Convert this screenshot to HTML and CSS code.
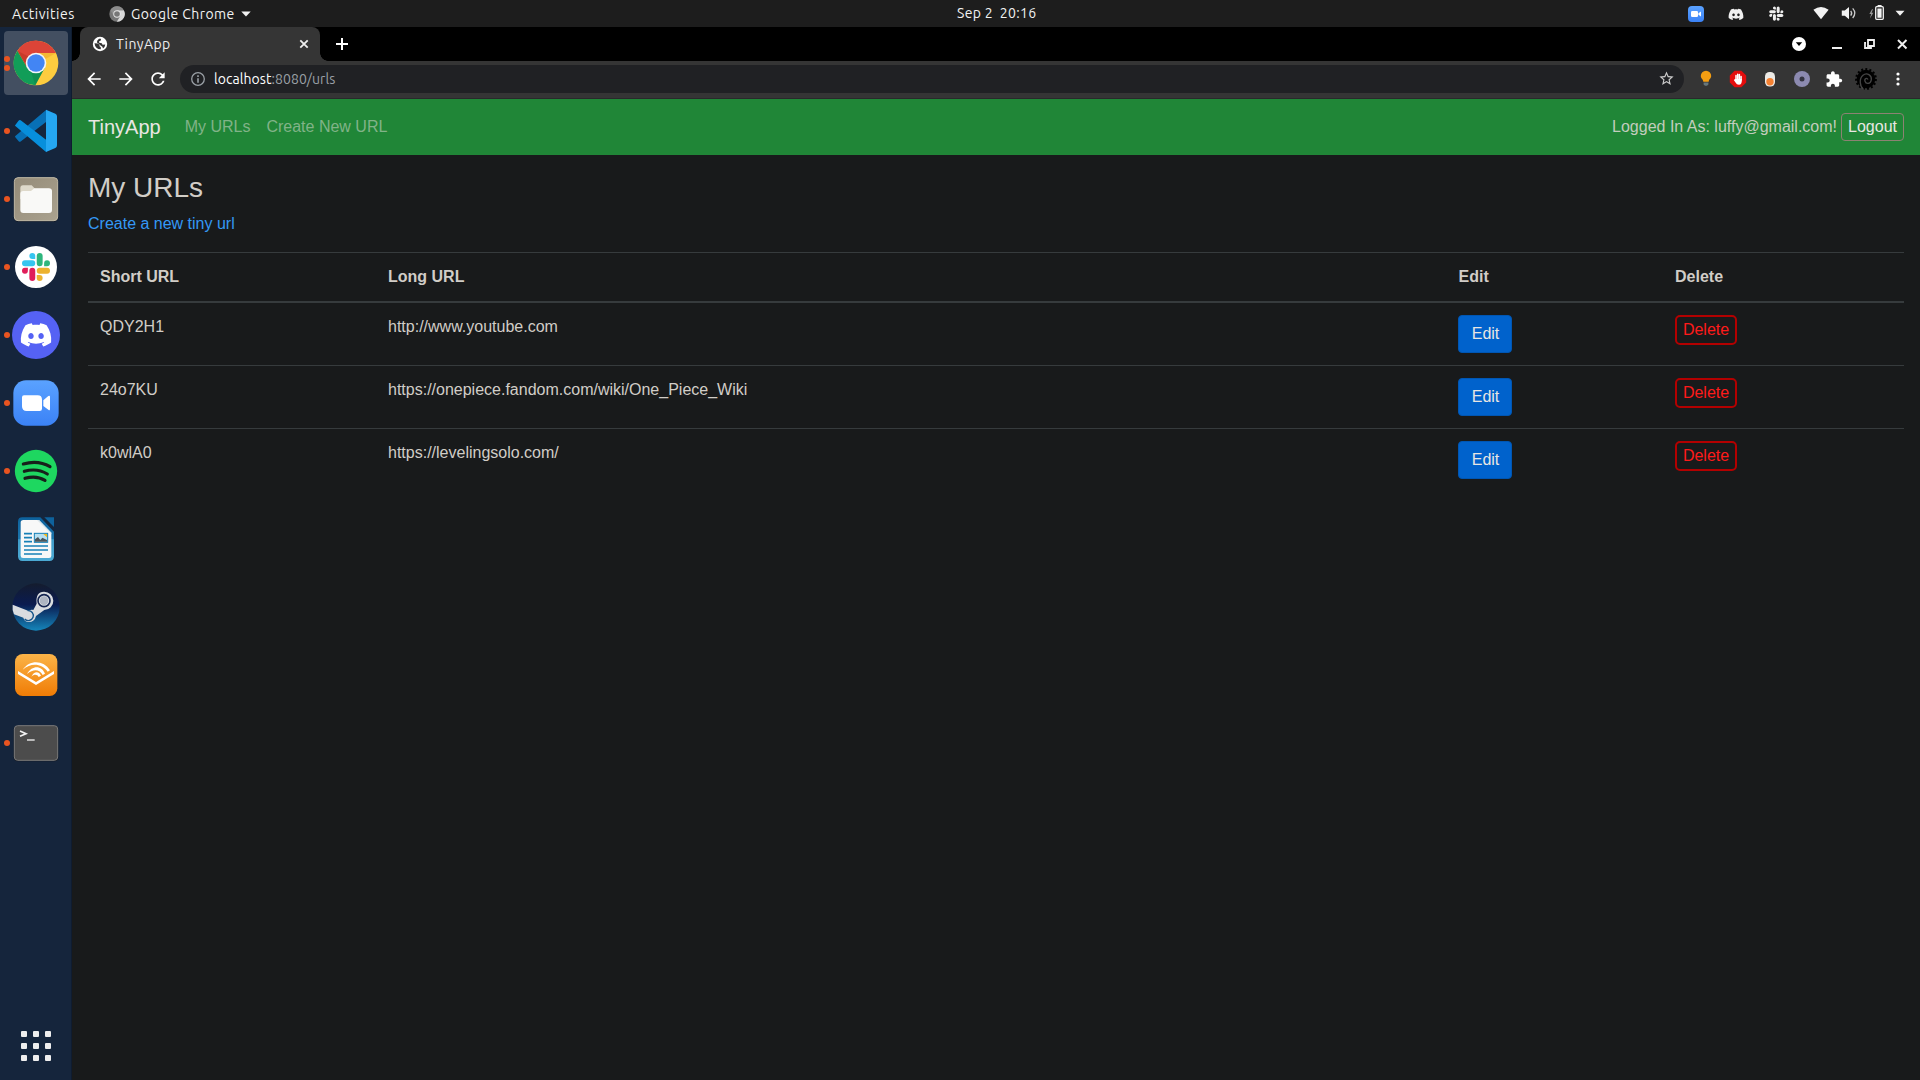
FILE: index.html
```html
<!DOCTYPE html>
<html lang="en">
<head>
<meta charset="utf-8">
<title>TinyApp</title>
<link rel="stylesheet" href="styles.css">
</head>
<body>
<svg class="defs" aria-hidden="true">
  <defs>
    <g id="slack-blade"><path d="M8.834 5.042a2.528 2.528 0 0 1-2.521-2.52A2.528 2.528 0 0 1 8.834 0a2.528 2.528 0 0 1 2.521 2.522v2.52H8.834zM8.834 6.313a2.528 2.528 0 0 1 2.521 2.521 2.528 2.528 0 0 1-2.521 2.521H2.522A2.528 2.528 0 0 1 0 8.834a2.528 2.528 0 0 1 2.522-2.521h6.312z"/></g>
    <path id="discord-face" d="M20.317 4.3698a19.7913 19.7913 0 00-4.8851-1.5152.0741.0741 0 00-.0785.0371c-.211.3753-.4447.8648-.6083 1.2495-1.8447-.2762-3.68-.2762-5.4868 0-.1636-.3933-.4058-.8742-.6177-1.2495a.077.077 0 00-.0785-.037 19.7363 19.7363 0 00-4.8852 1.515.0699.0699 0 00-.0321.0277C.5334 9.0458-.319 13.5799.0992 18.0578a.0824.0824 0 00.0312.0561c2.0528 1.5076 4.0413 2.4228 5.9929 3.0294a.0777.0777 0 00.0842-.0276c.4616-.6304.8731-1.2952 1.226-1.9942a.076.076 0 00-.0416-.1057c-.6528-.2476-1.2743-.5495-1.8722-.8923a.077.077 0 01-.0076-.1277c.1258-.0943.2517-.1923.3718-.2914a.0743.0743 0 01.0776-.0105c3.9278 1.7933 8.18 1.7933 12.0614 0a.0739.0739 0 01.0785.0095c.1202.099.246.1981.3728.2924a.077.077 0 01-.0066.1276 12.2986 12.2986 0 01-1.873.8914.0766.0766 0 00-.0407.1067c.3604.698.7719 1.3628 1.225 1.9932a.076.076 0 00.0842.0286c1.961-.6067 3.9495-1.5219 6.0023-3.0294a.077.077 0 00.0313-.0552c.5004-5.177-.8382-9.6739-3.5485-13.6604a.061.061 0 00-.0312-.0286zM8.02 15.3312c-1.1825 0-2.1569-1.0857-2.1569-2.419 0-1.3332.9555-2.4189 2.157-2.4189 1.2108 0 2.1757 1.0952 2.1568 2.419 0 1.3332-.9555 2.4189-2.1569 2.4189zm7.9748 0c-1.1825 0-2.1569-1.0857-2.1569-2.419 0-1.3332.9554-2.4189 2.1569-2.4189 1.2108 0 2.1757 1.0952 2.1568 2.419 0 1.3332-.946 2.4189-2.1568 2.4189Z"/>
    <linearGradient id="blue-tile" x2="0" y2="1"><stop offset="0" stop-color="#5aa2ff"/><stop offset="1" stop-color="#3b82f6"/></linearGradient>
    <linearGradient id="orange-tile" x2="0" y2="1"><stop offset="0" stop-color="#fbb448"/><stop offset="1" stop-color="#f07c05"/></linearGradient>
    <linearGradient id="steam-bg" x2="0" y2="1"><stop offset="0" stop-color="#141c2e"/><stop offset=".45" stop-color="#0a1b50"/><stop offset="1" stop-color="#1586bb"/></linearGradient>
    <linearGradient id="writer-bg" x2="0" y2="1"><stop offset="0" stop-color="#0d619c"/><stop offset=".5" stop-color="#1c76ad"/><stop offset=".51" stop-color="#3f9cc9"/><stop offset="1" stop-color="#4ba9d3"/></linearGradient>
    <linearGradient id="files-bg" x2="1" y2="1"><stop offset="0" stop-color="#948b78"/><stop offset="1" stop-color="#aaa28f"/></linearGradient>
  </defs>
</svg>

<header class="topbar">
  <span class="activities">Activities</span>
  <span class="app-menu">
    <svg width="16" height="16" viewBox="-8 -8 16 16"><circle r="7.7" fill="#777"/><path d="M0-3.8H6.8A7.7 7.7 0 0 1-.2 7.7L3.3 1.9z" fill="#d8d8d8"/><path d="M-6.6-4A7.7 7.7 0 0 1 6.8-3.8H0L-3.3 1.9z" fill="#8c8c8c"/><circle r="3.7" fill="#e6e6e6"/><circle r="2.8" fill="#777"/></svg>
    <span class="app-name">Google Chrome</span>
    <svg width="10" height="6" viewBox="0 0 10 6"><path d="M.3.4h9.4L5 5.4z" fill="#f2f2f2"/></svg>
  </span>
  <span class="clock">Sep 2&nbsp; 20:16</span>
  <div class="tray">
    <svg class="tray-app" viewBox="0 0 16 16"><rect width="16" height="16" rx="4" fill="url(#blue-tile)"/><rect x="3" y="5" width="7" height="6" rx="1.3" fill="#fff"/><path d="M10.4 7.2 13 5.4v5.2L10.4 8.8z" fill="#fff"/></svg>
    <svg class="tray-app" viewBox="-1 -1.5 26 26" fill="#f0f0f0"><use href="#discord-face"/></svg>
    <svg class="tray-app" viewBox="-2 -1 27 27" fill="#eee"><use href="#slack-blade"/><use href="#slack-blade" transform="rotate(90 12 12)"/><use href="#slack-blade" transform="rotate(180 12 12)"/><use href="#slack-blade" transform="rotate(270 12 12)"/></svg>
    <svg class="system" width="100" height="27" viewBox="0 0 100 27" fill="#f2f2f2">
      <path d="M.4 9.7Q8 4.3 15.6 9.7L8 19.2z"/>
      <path d="M28.8 10.4h3L36 7v12.3l-4.2-3.5h-3z"/><path d="M37.7 10.8q2 2.4 0 4.9M39.7 8.4q4.2 4.7 0 9.6" fill="none" stroke="#ccc" stroke-width="1.3"/>
      <path d="M59 9.3 56.4 14h1.8l-1.3 4.4 3.5-5.6h-1.8L60 9.3z" fill="#999"/><rect x="62.7" y="6.7" width="7.6" height="12.6" rx="1" fill="none" stroke="#f2f2f2" stroke-width="1.3"/><path d="M64.6 5h4v1.6h-4zM64.4 8.4h4.2v9.3h-4.2z"/>
      <path d="M82.5 10.8h9L87 15.8z"/>
    </svg>
  </div>
</header>

<div class="desktop">
  <aside class="dock">
    <div class="slot active"><span class="dots"><i></i><i></i></span>
      <svg viewBox="-96 -96 192 192"><circle r="67" fill="#fdcc3f"/><path d="M-56-37A67 67 0 0 1 60-30H0L-26 15z" fill="#dc4437"/><path d="M-56-37A67 67 0 0 0-2 67L26 15-26 15z" fill="#119d58"/><path d="M-56-37-26 15-20-18z" fill="#a52714" opacity=".35"/><path d="M0-30H60L24-10z" fill="#e89b20" opacity=".4"/><path d="M-2 67 26 15-14 29z" fill="#0b7440" opacity=".3"/><circle r="31" fill="#f3f5f7"/><circle r="26" fill="#4285f4"/></svg></div>
    <div class="slot"><span class="dots"><i></i></span>
      <svg viewBox="-96 -96 192 192"><path d="M-62 19-52 31Q-49 34-45 31L31-28V-64L-62 15Q-64 17-62 19z" fill="#0870b6"/><path d="M-62-18-53-30Q-49-35-44-31L31 27V64L-62-15Q-64-17-62-18z" fill="#078fdc"/><path d="M30-64 58-52Q63-50 63-44V43Q63 49 58 51L30 63z" fill="#25a7f2"/></svg></div>
    <div class="slot"><span class="dots"><i></i></span>
      <svg viewBox="-96 -96 192 192"><rect x="-67" y="-63" width="134" height="132" rx="13" fill="#111b2b"/><rect x="-65" y="-64" width="130" height="129" rx="11" fill="url(#files-bg)" stroke="#c1b9a5" stroke-width="3"/><path d="M-47-32Q-47-41-39-41H-13L-3-31H38Q47-31 47-22V0H-47z" fill="#ded9ca"/><path d="M-47-15Q-47-24-38-24H-15L-5-32H39Q48-32 48-23V33Q48 42 39 42H-38Q-47 42-47 33z" fill="#f9f9f7"/></svg></div>
    <div class="slot"><span class="dots"><i></i></span>
      <svg viewBox="-96 -96 192 192"><circle r="63" fill="#fff"/><g transform="translate(-42 -42) scale(3.5)"><use href="#slack-blade" fill="#36c5f0"/><use href="#slack-blade" transform="rotate(90 12 12)" fill="#2eb67d"/><use href="#slack-blade" transform="rotate(180 12 12)" fill="#ecb22e"/><use href="#slack-blade" transform="rotate(270 12 12)" fill="#e01e5a"/></g></svg></div>
    <div class="slot"><span class="dots"><i></i></span>
      <svg viewBox="-96 -96 192 192"><circle r="72" fill="#5562f4"/><g transform="translate(-45.5 -46) scale(3.8)" fill="#fff"><use href="#discord-face"/></g></svg></div>
    <div class="slot"><span class="dots"><i></i></span>
      <svg viewBox="-96 -96 192 192"><rect x="-68" y="-68" width="136" height="136" rx="38" fill="url(#blue-tile)"/><path d="M-42-17Q-42-23-36-23H5Q18-23 18-10V17Q18 24 11 24H-28Q-42 24-42 10zM22-8 37-21Q42-24 42-18V18Q42 24 37 20L22 9z" fill="#fff"/></svg></div>
    <div class="slot"><span class="dots"><i></i></span>
      <svg viewBox="-96 -96 192 192"><circle r="63.500" fill="#1ed760"/><path d="M-38-21Q6-34 42-13M-35 1Q3-10 34 9M-33 22Q1 12 27 28" fill="none" stroke="#17201b" stroke-linecap="round" stroke-width="9.500"/></svg></div>
    <div class="slot">
      <svg viewBox="-96 -96 192 192"><path d="M-41-65H13L54-22V52Q54 66 40 66H-41Q-54 66-54 52V-52Q-54-65-41-65z" fill="url(#writer-bg)"/><path d="M-38-57H9L46-19V50Q46 57 39 57H-39Q-46 57-46 50V-49Q-46-57-38-57z" fill="#f8f8f8"/><path d="M9-57 46-19V-14L3-57z" fill="#d8e4ea"/><path d="M25-65H54V-36z" fill="#0e629c"/><path d="M-36-16h24M-36-4h24M-36 8h24M-36 21h72M-36 33h72M-36 45h54" stroke="#1780b7" stroke-width="5"/><rect x="-5" y="-17" width="40" height="27" fill="#b7e0f2" stroke="#1780b7" stroke-width="3"/><path d="M22-15H33V-5z" fill="#f6b818"/><path d="M-3 8V1L6-6 13 3 19-4 33 3V8z" fill="#4b555b"/></svg></div>
    <div class="slot">
      <svg viewBox="-96 -96 192 192"><circle r="71" fill="url(#steam-bg)"/><path d="M-70-7-22 12Q-15 7-8 9L2-10Q-2-46 24-46A27 27 0 0 1 25 9L0 27Q-4 45-22 45-34 45-38 32L-66 22Q-72 8-70-7z" fill="#d9dce0"/><circle cx="24" cy="-19" r="18" fill="#dfe2e5" stroke="#142451" stroke-width="5"/><circle cx="24" cy="-19" r="13" fill="#aeb5c2"/><path d="M-25 11A15 15 0 1 1-34 36" fill="none" stroke="#15558a" stroke-width="4"/></svg></div>
    <div class="slot">
      <svg viewBox="-96 -96 192 192"><rect x="-63" y="-63" width="127" height="126" rx="23" fill="url(#orange-tile)"/><path d="M-54-12 0 21 54-12V-3L0 30-54-3z" fill="#fff"/><path d="M-40-16C-18-48 24-44 42-14L35-10C18-34-14-38-40-16zM-27-3C-10-32 18-27 27-4L20 0C11-18-8-19-27-3zM-14 5C-6-12 9-12 15 2L8 6C4-2-5-4-14 5z" fill="#fff"/></svg></div>
    <div class="slot"><span class="dots"><i></i></span>
      <svg viewBox="-96 -96 192 192"><rect x="-67" y="-52" width="134" height="107" rx="12" fill="#141820"/><rect x="-65" y="-52" width="130" height="104" rx="10" fill="#4c4c4c" stroke="#7a7a7a" stroke-width="3"/><path d="M-48-36-30-28-48-20" fill="none" stroke="#f2f2f2" stroke-width="5"/><path d="M-27-9H-4" stroke="#f2f2f2" stroke-width="4"/></svg></div>
    <div class="apps"><i></i><i></i><i></i><i></i><i></i><i></i><i></i><i></i><i></i></div>
  </aside>

  <section class="browser">
    <div class="tabstrip">
      <div class="tab">
        <svg width="18" height="18" viewBox="-9 -9 18 18"><circle r="7.200" fill="#fff"/><path d="M-5.500-.8-2.200-.5-.5.800V2.200L.8 3.200V5.300Q-4.800 5.300-5.500-.8zM.8-5.200 1-3.800-1-2.600-.8-1.200 1.800-.8 2.600.8 5.300.6Q5 3.200 3 4.600L2.400 2.800.6 1.600-.6.200-3-1.400-2.800-3.200-1-5.200z" fill="#353535"/></svg>
        <span class="tab-title">TinyApp</span>
        <svg width="10" height="10" viewBox="0 0 10 10"><path d="m1.300 1.300 7.400 7.400m0-7.400L1.300 8.700" stroke="#eee" stroke-width="1.800"/></svg>
      </div>
      <svg class="new-tab" width="12" height="12" viewBox="0 0 12 12"><path d="M6 0v12M0 6h12" stroke="#fff" stroke-width="2"/></svg>
      <svg class="window-controls" width="120" height="34" viewBox="0 0 120 34" fill="none" stroke="#eee" stroke-width="2"><circle cx="14" cy="17" r="7" fill="#fff" stroke="none"/><path d="M10.800 15.300h6.400L14 19z" fill="#000" stroke="none"/><path d="M47 21h10"/><path d="M83 13h6v6h-6zM81 16h-1v5h6v-1" stroke-width="1.800"/><path d="m113 13 8.500 8.500m0-8.500-8.500 8.500"/></svg>
    </div>
    <div class="toolbar">
      <div class="nav-buttons">
        <svg viewBox="0 0 24 24"><path d="M20 11H7.830l5.590-5.590L12 4l-8 8 8 8 1.410-1.410L7.830 13H20z"/></svg>
        <svg viewBox="0 0 24 24"><path d="m12 4-1.410 1.410L16.170 11H4v2h12.170l-5.580 5.590L12 20l8-8z"/></svg>
        <svg viewBox="0 0 24 24"><path d="M17.650 6.350C16.200 4.900 14.210 4 12 4c-4.420 0-7.990 3.580-7.990 8s3.570 8 7.990 8c3.730 0 6.840-2.550 7.730-6h-2.080c-.82 2.330-3.040 4-5.650 4-3.310 0-6-2.690-6-6s2.690-6 6-6c1.660 0 3.140.69 4.220 1.780L13 11h7V4z"/></svg>
      </div>
      <div class="address">
        <svg width="14" height="14" viewBox="0 0 14 14"><circle cx="7" cy="7" r="6.300" fill="none" stroke="#9aa0a6" stroke-width="1.300"/><path d="M6.200 3.300h1.600v1.600H6.200zM6.200 6.200h1.600v4.500H6.200z" fill="#9aa0a6"/></svg>
        <span class="url"><b>localhost</b>:8080/urls</span>
        <svg width="17" height="17" viewBox="0 0 24 24" fill="#ccc"><path d="m22 9.240-7.190-.62L12 2 9.190 8.630 2 9.240l5.460 4.730L5.820 21 12 17.270 18.180 21l-1.630-7.030zM12 15.400l-3.760 2.270 1-4.280-3.320-2.880 4.380-.38L12 6.100l1.710 4.040 4.380.38-3.320 2.880 1 4.280z"/></svg>
      </div>
      <div class="extensions">
        <svg viewBox="-16 -16 32 32"><path d="M-5.200-3A5.200 5.200 0 0 1 5.200-3C5.200-.5 3-.2 2.700 2.800h-5.400C-3-.2-5.200-.5-5.200-3z" fill="#f59e12"/><path d="M-2.400 3.500h4.800v2L1 6.700h-2L-2.400 5.500z" fill="#67777c"/></svg>
        <svg viewBox="-16 -16 32 32"><path d="M-3.400-8.200h6.800L8.200-3.400v6.800L3.400 8.200h-6.800L-8.200 3.400v-6.800z" fill="#e40d0d"/><path d="M-2 1V-3.500M-.3 0v-4.800M1.400 0v-4.600M3.100 1v-3.500" stroke="#fff" stroke-width="1.500" stroke-linecap="round"/><path d="M-2.700 0h6.500v2.200Q3.500 5.700 1 5.700T-2.300 3.800L-4.200.9l.9-.6z" fill="#fff"/></svg>
        <svg viewBox="-16 -16 32 32"><rect x="-5" y="-7" width="10" height="14.500" rx="4.500" fill="#eceae6"/><circle cy="2.700" r="3.700" fill="#f58132"/></svg>
        <svg viewBox="-16 -16 32 32"><circle r="8" fill="#8c8ab0"/><circle r="2.500" fill="#343441"/></svg>
        <svg viewBox="-9.500 -10 43 43"><path fill="#fff" d="M20.500 11H19V7c0-1.100-.9-2-2-2h-4V3.500C13 2.120 11.880 1 10.500 1S8 2.120 8 3.500V5H4c-1.100 0-1.990.9-1.990 2v3.800H3.500c1.490 0 2.700 1.210 2.700 2.700s-1.210 2.700-2.700 2.700H2V20c0 1.100.9 2 2 2h3.800v-1.500c0-1.490 1.210-2.700 2.700-2.700s2.700 1.210 2.700 2.700V22H17c1.100 0 2-.9 2-2v-4h1.500c1.380 0 2.500-1.120 2.500-2.500S21.880 11 20.500 11z"/></svg>
        <svg viewBox="-16 -16 32 32" fill="none" stroke="#000"><circle r="9.900" stroke-width="2" stroke-dasharray="2 2.150"/><circle r="9.300" fill="#000" stroke="none"/><path d="M-2.500 10.500C-6.500 7-7-.5-3-3.800S6-3.500 5.300.8 0 5.500-1 2.300 1.200-1.200 2 .6" stroke="#454545" stroke-width="1.300"/></svg>
        <svg viewBox="-16 -16 32 32" fill="#fff"><circle cy="-5" r="1.600"/><circle r="1.600"/><circle cy="5" r="1.600"/></svg>
      </div>
    </div>

    <main class="page">
      <nav class="navbar">
        <a class="brand">TinyApp</a>
        <a class="nav-link">My URLs</a>
        <a class="nav-link">Create New URL</a>
        <span class="session">Logged In As: luffy@gmail.com!</span>
        <button class="logout">Logout</button>
      </nav>
      <div class="content">
        <h3>My URLs</h3>
        <a class="create">Create a new tiny url</a>
        <table>
          <colgroup><col class="c-short"><col class="c-long"><col class="c-edit"><col></colgroup>
          <thead><tr><th>Short URL</th><th>Long URL</th><th>Edit</th><th>Delete</th></tr></thead>
          <tbody>
            <tr><td>QDY2H1</td><td>http://www.youtube.com</td><td><button class="edit">Edit</button></td><td><button class="delete">Delete</button></td></tr>
            <tr><td>24o7KU</td><td>https://onepiece.fandom.com/wiki/One_Piece_Wiki</td><td><button class="edit">Edit</button></td><td><button class="delete">Delete</button></td></tr>
            <tr><td>k0wlA0</td><td>https://levelingsolo.com/</td><td><button class="edit">Edit</button></td><td><button class="delete">Delete</button></td></tr>
          </tbody>
        </table>
      </div>
    </main>
  </section>
</div>
</body>
</html>
```
FILE: styles.css
```css
* { box-sizing: border-box; }
body {
  margin: 0;
  width: 1920px;
  height: 1080px;
  overflow: hidden;
  display: flex;
  flex-direction: column;
  background: #181a1b;
  color: #d1cdc7;
  font: 16px/24px "Liberation Sans", Arial, sans-serif;
}
svg { display: block; flex: none; }
.defs { position: absolute; width: 0; height: 0; }

/* desktop top bar */
.topbar {
  flex: none;
  height: 27px;
  display: grid;
  grid-template-columns: 109px 848px 1fr auto;
  align-items: center;
  background: #1d1d1d;
  color: #f2f2f2;
  font: 14px/26px Ubuntu, "Noto Sans", sans-serif;
}
.activities { padding-left: 12px; letter-spacing: .55px; }
.app-menu { display: flex; align-items: center; gap: 6px; }
.app-name { letter-spacing: .43px; }
.clock { letter-spacing: .3px; line-height: 24px; padding-bottom: 2px; }
.tray { display: flex; align-items: center; padding-right: 7px; }
.tray-app { width: 16px; height: 16px; margin-right: 24px; }
.tray-app:nth-child(3) { margin-right: 29px; }

.desktop { flex: 1; display: flex; min-height: 0; }

/* dock */
.dock {
  flex: none;
  width: 72px;
  padding: 4px 4px 19px;
  display: flex;
  flex-direction: column;
  gap: 4px;
  background: #15253c;
  border-right: 1px solid #0f1c30;
}
.slot { position: relative; width: 64px; height: 64px; border-radius: 4px; }
.slot.active { background: #434f61; }
.slot svg { width: 64px; height: 64px; }
.dots {
  position: absolute;
  left: 0;
  top: 0;
  height: 64px;
  display: flex;
  flex-direction: column;
  justify-content: center;
  gap: 3px;
}
.dots i { width: 6px; height: 6px; border-radius: 50%; background: #e95420; }
.apps {
  margin: auto 0 0 17px;
  display: grid;
  grid-template-columns: repeat(3, 6px);
  grid-auto-rows: 6px;
  gap: 6px;
}
.apps i { background: #eee; border-radius: 1px; }

/* browser chrome */
.browser { flex: 1; display: flex; flex-direction: column; min-width: 0; }
.tabstrip {
  height: 34px;
  flex: none;
  display: flex;
  align-items: center;
  padding-left: 8px;
  background: #000;
}
.tab {
  position: relative;
  width: 240px;
  height: 34px;
  padding: 0 11px;
  display: flex;
  align-items: center;
  background: #353535;
  border-radius: 8px 8px 0 0;
}
.tab::before, .tab::after {
  content: "";
  position: absolute;
  bottom: 0;
  width: 8px;
  height: 8px;
}
.tab::before { left: -8px; background: radial-gradient(circle at 0 0, #000 7.500px, #353535 8px); }
.tab::after { right: -8px; background: radial-gradient(circle at 100% 0, #000 7.500px, #353535 8px); }
.tab-title { flex: 1; padding-left: 7px; color: #eee; font: 14px/20px Ubuntu, "Noto Sans", sans-serif; letter-spacing: .45px; }
.new-tab { margin-left: 16px; }
.window-controls { margin-left: auto; margin-right: 15px; overflow: visible; }
.toolbar {
  height: 38px;
  flex: none;
  display: flex;
  align-items: center;
  padding: 0 6px 2px 12px;
  background: #353535;
  border-bottom: 1px solid #29292b;
}
.nav-buttons { display: flex; gap: 12px; }
.nav-buttons svg { width: 20px; height: 20px; fill: #fff; }
.address {
  flex: 1;
  height: 28px;
  margin-left: 12px;
  padding: 0 9px 0 11px;
  display: flex;
  align-items: center;
  border-radius: 14px;
  background: #202124;
}
.url { flex: 1; padding-left: 9px; color: #9aa0a6; font: 14px/20px Ubuntu, "Noto Sans", sans-serif; letter-spacing: .06px; }
.url b { color: #fff; font-weight: 400; }
.extensions { display: flex; margin-left: 6px; }
.extensions svg { width: 32px; height: 32px; }

/* web page */
.page { flex: 1; background: #181a1b; }
.navbar {
  height: 56px;
  padding: 0 16px;
  display: flex;
  align-items: center;
  background: #208637;
}
.brand { margin-right: 16px; font-size: 20px; color: #e8e6e3; }
.nav-link { padding: 0 8px; color: #81b388; }
.session { margin-left: auto; margin-right: 4px; color: #c2cdbd; }
button { display: block; margin: 0; font: inherit; background: none; }
.logout {
  height: 28px;
  width: 63px;
  padding: 0;
  line-height: 24px;
  color: #e8e6e3;
  border: 1px solid #8c8273;
  border-radius: 4px;
}
.content { padding: 16px; }
h3 { margin: 0 0 7.400px; font-size: 28px; line-height: 33.600px; font-weight: 400; }
.create { display: block; color: #3498f5; }
table {
  width: 1816px;
  margin-top: 16px;
  table-layout: fixed;
  border-spacing: 0;
}
.c-short { width: 288px; }
.c-long { width: 1070px; }
.c-edit { width: 217px; }
th, td { padding: 12px; text-align: left; vertical-align: top; border-top: 1px solid #363b3d; }
th { border-bottom: 2px solid #363b3d; }
th:nth-child(3) { padding-left: 12.500px; }
tbody tr:first-child td { border-top: 0; }
.edit {
  width: 54px;
  height: 38px;
  padding: 0 0 0 1px;
  color: #e8e6e3;
  background: #0062cc;
  border: 1px solid #0056b3;
  border-radius: 4px;
}
.delete {
  width: 62px;
  height: 30px;
  padding: 0;
  color: #ff1a1a;
  border: 2px solid #b30000;
  border-radius: 5px;
}
```
